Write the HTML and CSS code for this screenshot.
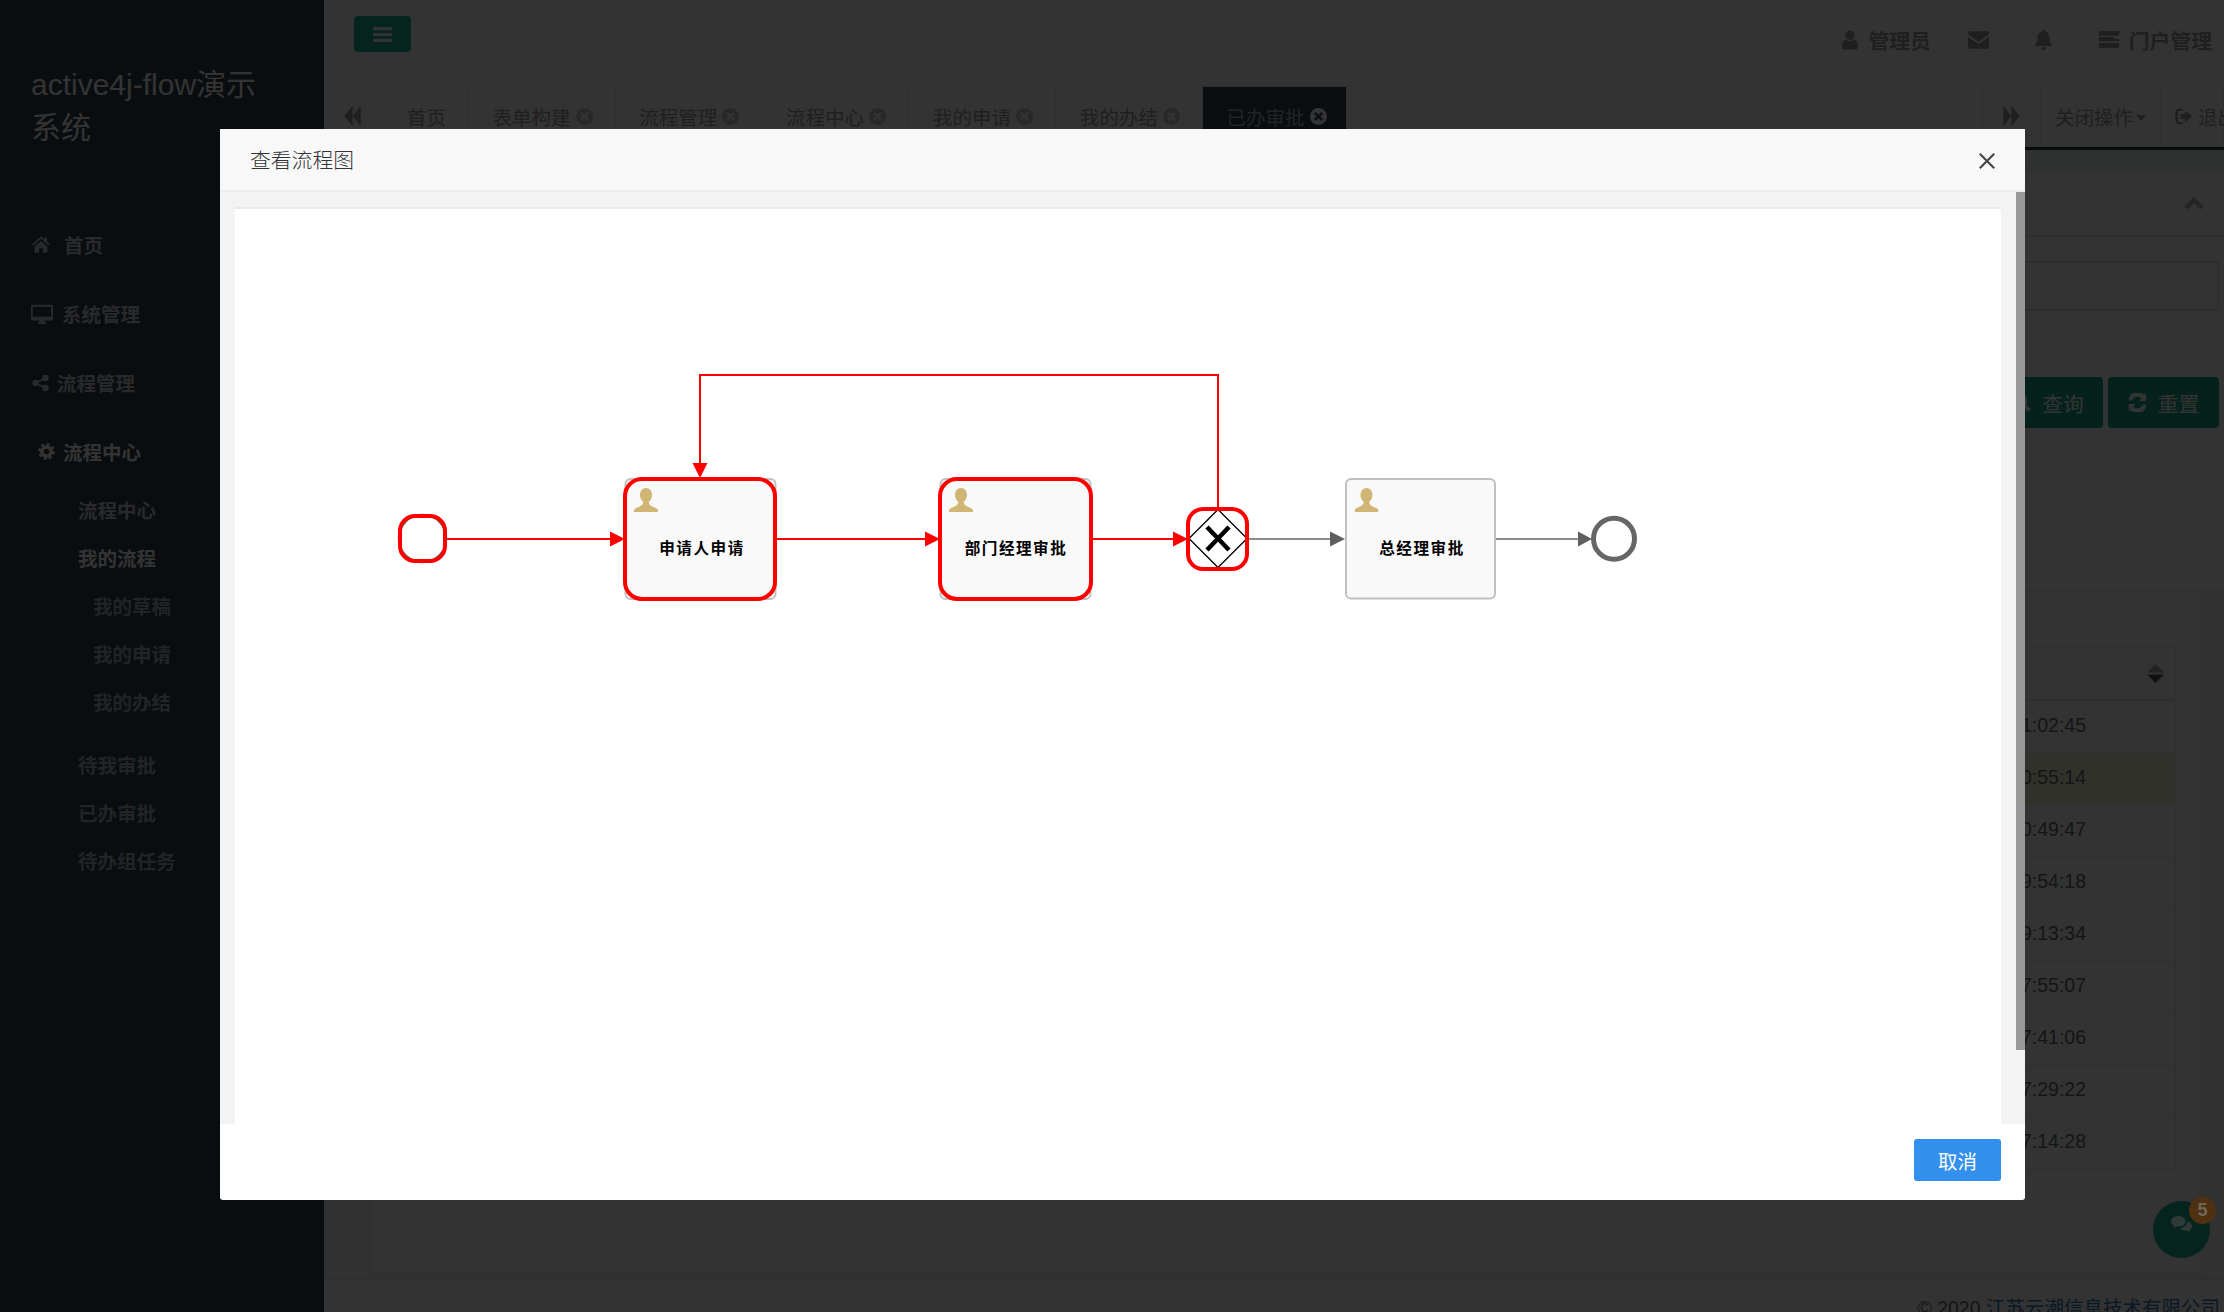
FILE: index.html
```html
<!DOCTYPE html>
<html lang="zh">
<head>
<meta charset="utf-8">
<title>查看流程图</title>
<link rel="stylesheet" href="styles.css">
</head>
<body>
<svg class="sprite" xmlns="http://www.w3.org/2000/svg" aria-hidden="true">
  <symbol id="i-home" viewBox="0 0 24 22"><path d="M12 0 L0 11 l1.6 1.8 L12 3.4 l10.4 9.4 L24 11 l-4-3.6 V1.5 h-3.4 v2.8z M3.5 14 v8 h6 v-6 h5 v6 h6 v-8 L12 6.2z"/></symbol>
  <symbol id="i-desktop" viewBox="0 0 24 24"><path fill-rule="evenodd" d="M1.5 2 h21 A1.5 1.5 0 0 1 24 3.5 v14 a1.5 1.5 0 0 1-1.5 1.5 H15 v1.5 l1.5 1.5 v1 h-9 v-1 L9 20.500 V19 H1.500 A1.500 1.500 0 0 1 0 17.500 v-14 A1.500 1.500 0 0 1 1.500 2z M2 4 v11 h20 V4z"/></symbol>
  <symbol id="i-share" viewBox="0 0 24 24"><circle cx="19" cy="5" r="4.500"/><circle cx="5" cy="12" r="4.500"/><circle cx="19" cy="19" r="4.500"/><path d="M19 5 L5 12 L19 19" fill="none" stroke="currentColor" stroke-width="2.500"/></symbol>
  <symbol id="i-cog" viewBox="0 0 24 24"><circle cx="12" cy="12" r="6.500" fill="none" stroke="currentColor" stroke-width="5"/><circle cx="12" cy="12" r="10" fill="none" stroke="currentColor" stroke-width="4" stroke-dasharray="4 3.850"/></symbol>
  <symbol id="i-user" viewBox="0 0 20 24"><circle cx="10" cy="6" r="6"/><path d="M0 21 c0-6 2-9 5-9.500 c3 2.500 7 2.500 10 0 c3 .5 5 3.500 5 9.500 c0 2-1.500 3-3 3 H3 c-1.500 0-3-1-3-3z"/></symbol>
  <symbol id="i-mail" viewBox="0 0 24 20"><path d="M2 0 h20 a2 2 0 0 1 2 2 c0 1-.7 2-1.700 2.800 L12 12 L1.700 4.800 C.7 4 0 3 0 2 a2 2 0 0 1 2-2z M0 6.500 L12 14.500 L24 6.500 V18 a2 2 0 0 1-2 2 H2 a2 2 0 0 1-2-2z"/></symbol>
  <symbol id="i-bell" viewBox="0 0 22 24"><path d="M11 0 a1.500 1.500 0 0 1 1.500 2 C16 3 18 6 18 10 c0 5 2 7 4 9 H0 c2-2 4-4 4-9 c0-4 2-7 5.500-8 A1.500 1.500 0 0 1 11 0z M8 20.500 h6 a3 3 0 0 1-6 0z"/></symbol>
  <symbol id="i-list" viewBox="0 0 24 20"><path d="M0 0 h24 v5.500 H0z M0 7 h18 v2 h6 v3 H0z M0 14 h24 v4 a2 2 0 0 1-2 2 H0z"/></symbol>
  <symbol id="i-bars" viewBox="0 0 20 18"><path d="M0 1 h20 v3.400 H0z M0 7.300 h20 v3.400 H0z M0 13.600 h20 v3.400 H0z"/></symbol>
  <symbol id="i-back" viewBox="0 0 18 22"><path d="M9 0 V22 L0 11z M18 0 V22 L9 11z"/></symbol>
  <symbol id="i-fwd" viewBox="0 0 18 22"><path d="M0 0 V22 L9 11z M9 0 V22 L18 11z"/></symbol>
  <symbol id="i-exit" viewBox="0 0 20 20"><path d="M5 1 h4 v2.500 H5 A1.500 1.500 0 0 0 3.500 5 v10 A1.500 1.500 0 0 0 5 16.500 h4 V19 H5 A4.500 4.500 0 0 1 .5 14.500 v-9 A4.500 4.500 0 0 1 5 1z M12 3 l8 7 l-8 7 v-4 H6.500 V7 H12z"/></symbol>
  <symbol id="i-close" viewBox="0 0 20 20"><path fill-rule="evenodd" d="M10 0 a10 10 0 1 1 0 20 a10 10 0 0 1 0-20z M6.800 4.700 L4.700 6.800 L7.900 10 L4.700 13.200 L6.800 15.300 L10 12.100 L13.200 15.300 L15.300 13.200 L12.100 10 L15.300 6.800 L13.200 4.700 L10 7.900z"/></symbol>
  <symbol id="i-search" viewBox="0 0 24 24"><circle cx="10" cy="10" r="7.500" fill="none" stroke="currentColor" stroke-width="4"/><path d="M15 15 L22 22" fill="none" stroke="currentColor" stroke-width="5"/></symbol>
  <symbol id="i-refresh" viewBox="0 0 24 24"><path d="M20 2 l3 -1 v9 h-9 l3.200-3.200 A7.500 7.500 0 0 0 5 9.500 H1 A11 11 0 0 1 20 2z M4 22 l-3 1 v-9 h9 l-3.200 3.200 A7.500 7.500 0 0 0 19 14.500 h4 A11 11 0 0 1 4 22z"/></symbol>
  <symbol id="i-comments" viewBox="0 0 26 22"><path d="M9 0 c5 0 9 2.800 9 6.500 S14 13 9 13 c-.8 0-1.500 0-2.200-.2 C5.500 14 4 14.600 2.500 15 C3.200 14 3.600 13 3.700 11.800 C1.400 10.600 0 8.700 0 6.500 C0 2.800 4 0 9 0z"/><path d="M20 6.500 C23.500 7.500 26 9.800 26 12.500 c0 2-1.200 3.600-3 4.600 c.1 1.200.5 2.200 1.200 2.900 c-1.500-.3-3-1-4.200-2.100 c-3.500.3-7-.8-8.500-3 C16 14.500 20.500 11.500 20 6.500z"/></symbol>
  <symbol id="i-task-user" viewBox="0 0 24 24"><path d="M12 0 c3.600 0 6 3 6 6.800 c0 3-1.200 5.400-3.100 7 c-.4 2 .6 3.400 3 4.500 l4.700 2.200 c.9.5 1.400 1.400 1.400 2.500 v1 H0 v-1 c0-1.100.5-2 1.400-2.500 l4.700-2.200 c2.400-1.100 3.400-2.500 3-4.500 C7.200 12.200 6 9.800 6 6.800 C6 3 8.400 0 12 0z"/></symbol>
</svg>

<div class="app">
  <aside class="sidebar">
    <h1 class="brand">active4j-flow演示系统</h1>
    <nav class="nav">
      <a class="nav-top"><svg class="ico ico-home"><use href="#i-home"/></svg>首页</a>
      <a class="nav-top"><svg class="ico ico-desktop"><use href="#i-desktop"/></svg>系统管理</a>
      <a class="nav-top"><svg class="ico ico-share"><use href="#i-share"/></svg>流程管理</a>
      <a class="nav-top nav-open"><svg class="ico ico-cog"><use href="#i-cog"/></svg>流程中心</a>
      <a class="nav-sub nav-first">流程中心</a>
      <a class="nav-sub nav-sub-open">我的流程</a>
      <a class="nav-third">我的草稿</a>
      <a class="nav-third">我的申请</a>
      <a class="nav-third">我的办结</a>
      <a class="nav-sub nav-gap">待我审批</a>
      <a class="nav-sub">已办审批</a>
      <a class="nav-sub">待办组任务</a>
    </nav>
  </aside>

  <main class="main">
    <header class="topbar">
      <button class="menu-btn"><svg class="ico-bars"><use href="#i-bars"/></svg></button>
      <div class="top-links">
        <span class="top-link top-user"><svg class="ico-user"><use href="#i-user"/></svg>管理员</span>
        <svg class="ico-mail"><use href="#i-mail"/></svg>
        <svg class="ico-bell"><use href="#i-bell"/></svg>
        <span class="top-link"><svg class="ico-list"><use href="#i-list"/></svg>门户管理</span>
      </div>
    </header>

    <div class="tabs">
      <span class="tab-arrow tab-arrow-left"><svg class="ico-arrow"><use href="#i-back"/></svg></span>
      <span class="tab tab-home">首页</span>
      <span class="tab">表单构建<svg class="tab-x"><use href="#i-close"/></svg></span>
      <span class="tab">流程管理<svg class="tab-x"><use href="#i-close"/></svg></span>
      <span class="tab">流程中心<svg class="tab-x"><use href="#i-close"/></svg></span>
      <span class="tab">我的申请<svg class="tab-x"><use href="#i-close"/></svg></span>
      <span class="tab">我的办结<svg class="tab-x"><use href="#i-close"/></svg></span>
      <span class="tab tab-active">已办审批<svg class="tab-x"><use href="#i-close"/></svg></span>
      <span class="tab-arrow tab-arrow-right"><svg class="ico-arrow"><use href="#i-fwd"/></svg></span>
      <span class="tab-ops">关闭操作<i class="caret"></i></span>
      <span class="tab-exit"><svg class="ico-exit"><use href="#i-exit"/></svg>退出</span>
    </div>

    <section class="content">
      <div class="strip"></div>
      <div class="search-box">
        <div class="search-head"><svg class="chevron" viewBox="0 0 20 14"><path d="M2 12 L10 4 L18 12"/></svg></div>
        <div class="search-body">
          <div class="search-input"></div>
          <div class="search-actions">
            <button class="btn btn-query"><svg class="btn-ico"><use href="#i-search"/></svg>查询</button>
            <button class="btn btn-reset"><svg class="btn-ico"><use href="#i-refresh"/></svg>重置</button>
          </div>
        </div>
      </div>
      <div class="list-panel">
        <div class="list-table">
          <div class="list-head"><svg class="sort" viewBox="0 0 18 20"><path class="sort-up" d="M9 0 L18 9 H0z"/><path d="M0 11 H18 L9 20z"/></svg></div>
          <div class="list-row">11:02:45</div>
          <div class="list-row list-row-on">10:55:14</div>
          <div class="list-row">10:49:47</div>
          <div class="list-row">09:54:18</div>
          <div class="list-row">09:13:34</div>
          <div class="list-row">17:55:07</div>
          <div class="list-row">17:41:06</div>
          <div class="list-row">17:29:22</div>
          <div class="list-row">17:14:28</div>
        </div>
      </div>
    </section>

    <footer class="footer">© 2020 <a class="footer-link">江苏云潮信息技术有限公司</a></footer>
  </main>
</div>

<div class="shade"></div>

<div class="chat">
  <svg class="chat-ico"><use href="#i-comments"/></svg>
  <span class="chat-badge">5</span>
</div>

<div class="modal">
  <div class="modal-head">
    <span class="modal-title">查看流程图</span>
    <svg class="modal-x" viewBox="0 0 20 20"><path d="M2 2 L18 18 M18 2 L2 18"/></svg>
  </div>
  <div class="modal-body">
    <div class="diagram">
      <svg class="flow" viewBox="235 209 1766 915" xmlns="http://www.w3.org/2000/svg">
        <g class="ln-red">
          <path d="M447 539 H612"/>
          <path d="M777 539 H927"/>
          <path d="M1093 539 H1175"/>
          <path d="M1218 507 V375 H700 V465"/>
        </g>
        <g class="ar-red">
          <path d="M610 531.500 L625 539 L610 546.500z"/>
          <path d="M925 531.500 L940 539 L925 546.500z"/>
          <path d="M1173 531.500 L1188 539 L1173 546.500z"/>
          <path d="M692.500 463 H707.500 L700 478z"/>
        </g>
        <g class="ln-grey">
          <path d="M1248 539 H1332"/>
          <path d="M1496 539 H1580"/>
        </g>
        <g class="ar-grey">
          <path d="M1330 531.500 L1345 539 L1330 546.500z"/>
          <path d="M1578 531.500 L1592 539 L1578 546.500z"/>
        </g>

        <circle class="ev-under" cx="422.500" cy="538.500" r="23.800"/>
        <rect class="hl" x="400" y="516" width="45" height="45" rx="15"/>

        <rect class="task" x="625.500" y="479" width="150" height="120" rx="5"/>
        <rect class="hl" x="625" y="479" width="150" height="120" rx="17"/>
        <use href="#i-task-user" class="task-ico" x="634" y="488" width="24" height="24"/>
        <text class="task-label" x="702" y="554">申请人申请</text>

        <rect class="task" x="940.500" y="479" width="150" height="120" rx="5"/>
        <rect class="hl" x="940" y="479" width="151" height="120" rx="17"/>
        <use href="#i-task-user" class="task-ico" x="949" y="488" width="24" height="24"/>
        <text class="task-label" x="1016" y="554">部门经理审批</text>

        <path class="gw" d="M1218 509.500 L1247 538.500 L1218 567.500 L1189 538.500z"/>
        <path class="gw-x" d="M1207 527 L1229 550 M1229 527 L1207 550"/>
        <rect class="hl" x="1188" y="509" width="59" height="60" rx="15"/>

        <rect class="task" x="1346" y="479" width="149" height="119.500" rx="5"/>
        <use href="#i-task-user" class="task-ico" x="1354.500" y="488" width="24" height="24"/>
        <text class="task-label" x="1422" y="554">总经理审批</text>

        <circle class="ev-end" cx="1614" cy="538.700" r="20.500"/>
      </svg>
    </div>
    <div class="modal-scroll"></div>
  </div>
  <div class="modal-foot"><button class="modal-cancel">取消</button></div>
</div>
</body>
</html>
```

FILE: styles.css
```css
* { box-sizing: border-box; }
html, body { margin: 0; height: 100%; }
body {
  position: relative;
  width: 2224px;
  height: 1312px;
  overflow: hidden;
  font-family: "Liberation Sans", "Noto Sans CJK SC", sans-serif;
  font-size: 19.5px;
  color: #676a6c;
  background: #fff;
}
svg { fill: currentColor; display: block; flex: none; }
.sprite { position: absolute; width: 0; height: 0; }

.app { display: flex; height: 1312px; }

/* sidebar */
.sidebar { width: 324px; flex: none; background: #2f4050; color: #a7b1c2; }
.brand {
  margin: 0;
  padding: 63px 50px 0 31px;
  font-size: 30px;
  font-weight: 400;
  line-height: 43px;
  color: #fff;
}
.nav { margin-top: 61px; display: flex; flex-direction: column; }
.nav-top {
  display: flex;
  align-items: center;
  height: 69px;
  padding-left: 32px;
  font-weight: 700;
  color: #c9ced8;
}
.nav-open { padding-left: 38px; color: #fff; height: 69px; }
.ico-home { width: 18px; height: 17px; margin-right: 14px; }
.ico-desktop { width: 22px; height: 22px; margin: 0 9px 0 -1px; }
.ico-share { width: 17px; height: 18px; margin-right: 8px; }
.ico-cog { width: 17px; height: 17px; margin-right: 8px; }
.nav-sub {
  display: flex;
  align-items: center;
  height: 47.800px;
  padding-left: 78px;
  font-weight: 700;
  color: #a7b1c2;
}
.nav-first { color: #c9ced8; }
.nav-sub-open { color: #fff; }
.nav-third {
  display: flex;
  align-items: center;
  height: 48px;
  padding-left: 93px;
  font-weight: 700;
}
.nav-gap { margin-top: 15px; }

/* main */
.main { flex: 1; min-width: 0; display: flex; flex-direction: column; overflow: hidden; }
.topbar {
  height: 87px;
  flex: none;
  display: flex;
  justify-content: space-between;
  padding: 16px 12px 0 30px;
  border-bottom: 1px solid #f0f0f0;
}
.menu-btn {
  width: 57px;
  height: 36px;
  border: 0;
  border-radius: 4px;
  background: #1ab394;
  color: #fff;
  display: flex;
  align-items: center;
  justify-content: center;
  padding: 0;
}
.ico-bars { width: 19px; height: 17px; }
.top-links {
  display: flex;
  align-items: center;
  height: 47px;
  font-size: 20.800px;
  font-weight: 700;
  color: #999c9e;
}
.top-link { display: flex; align-items: center; }
.ico-user { width: 16px; height: 20px; margin-right: 10px; }
.ico-mail { width: 21px; height: 18px; margin: 0 45px 0 37px; }
.ico-bell { width: 19px; height: 22px; margin-right: 45px; }
.ico-list { width: 22px; height: 17px; margin-right: 9px; }

.tabs {
  height: 63px;
  flex: none;
  display: flex;
  align-items: stretch;
  border-bottom: 3px solid #2f4050;
  color: #999c9e;
}
.tabs > span { display: flex; align-items: center; border-right: 1px solid #e7eaec; padding-bottom: 2px; }
.tab-arrow { justify-content: center; }
.tab-arrow-left { width: 58px; }
.tab-arrow-right { width: 59px; margin-left: auto; border-left: 1px solid #e7eaec; }
.ico-arrow { width: 17px; height: 20px; }
.tab { width: 146.800px; padding-left: 23.500px; white-space: nowrap; }
.tab-home { width: 87px; padding-left: 25px; }
.tab-x { width: 17px; height: 17px; margin-left: 5px; color: #c4c6c8; }
.tab-active { background: #2f4050; color: #a7b1c2; width: 144px; border-right: 0; }
.tab-active .tab-x { color: #fff; }
.tab-ops { width: 120px; padding-left: 14px; white-space: nowrap; }
.caret {
  width: 0;
  height: 0;
  margin: 4px 0 0 3px;
  border-top: 6px solid currentColor;
  border-left: 5.500px solid transparent;
  border-right: 5.500px solid transparent;
}
.tab-exit { width: 63px; flex: none; padding-left: 14px; white-space: nowrap; }
.ico-exit { width: 17px; height: 17px; margin-right: 6px; }

.content { flex: 1; min-height: 0; background: #f3f3f4; display: flex; flex-direction: column; }
.strip { height: 21px; background: #ecf3ef; flex: none; }
.search-box { background: #fff; height: 419px; flex: none; }
.search-head {
  height: 66px;
  display: flex;
  align-items: center;
  justify-content: flex-end;
  padding-right: 20px;
  border-bottom: 2px solid #e7eaec;
}
.chevron { width: 20px; height: 14px; fill: none; stroke: #b4b4b4; stroke-width: 4.500px; }
.search-body { padding: 24px 5px 0 0; }
.search-input { height: 50px; margin-left: 1700px; border: 2px solid #e5e6e7; }
.search-actions { display: flex; justify-content: flex-end; gap: 5px; margin-top: 66px; }
.btn {
  height: 51px;
  border: 0;
  border-radius: 4px;
  background: #18a689;
  color: #fff;
  font: inherit;
  font-size: 20.800px;
  display: flex;
  align-items: center;
  justify-content: center;
  gap: 11px;
  padding: 0;
}
.btn-query { width: 110px; }
.btn-reset { width: 111px; }
.btn-ico { width: 19px; height: 19px; }
.list-panel {
  height: 683px;
  flex: none;
  margin: 0 23px 5px 46px;
  background: #fff;
  border: 2px solid #ededed;
  padding: 55px 23px 0 23px;
}
.list-table { border: 1px solid #e7eaec; border-bottom: 0; color: #676a6c; }
.list-head {
  height: 53px;
  display: flex;
  align-items: center;
  justify-content: flex-end;
  padding-right: 11px;
  border-bottom: 2px solid #e7eaec;
}
.sort { width: 17px; height: 19px; fill: #555; }
.sort-up { fill: #aaa; }
.list-row {
  height: 52px;
  line-height: 48px;
  text-align: right;
  padding-right: 89px;
  border-bottom: 1px solid #e7eaec;
}
.list-row-on { background: #f6f6d8; }
.footer {
  height: 34px;
  flex: none;
  padding: 17px 4px 0 0;
  text-align: right;
  line-height: 22px;
  background: #fff;
  border-top: 2px solid #e7eaec;
  white-space: nowrap;
}
.footer-link { color: #337ab7; }

/* overlay + what sits on it */
.shade { position: absolute; inset: 0; background: rgba(0, 0, 0, .8); }
.chat {
  position: absolute;
  left: 2153px;
  top: 1201px;
  width: 57px;
  height: 57px;
  border-radius: 50%;
  background: #05241e;
  color: #2f3a37;
  display: flex;
  align-items: center;
  justify-content: center;
}
.chat-ico { width: 21px; height: 18px; margin-bottom: 9px; }
.chat-badge {
  position: absolute;
  left: 36px;
  top: -4px;
  width: 27px;
  height: 27px;
  border-radius: 50%;
  background: #4f3010;
  color: #6f6657;
  font-size: 18px;
  font-weight: 700;
  line-height: 27px;
  text-align: center;
}
.modal {
  position: absolute;
  left: 220px;
  top: 129px;
  width: 1805px;
  height: 1071px;
  background: #fff;
  border-radius: 0 0 3px 3px;
  display: flex;
  flex-direction: column;
  overflow: hidden;
}
.modal-head {
  height: 63px;
  flex: none;
  display: flex;
  align-items: center;
  justify-content: space-between;
  padding: 0 29px 2px 30px;
  background: #f8f8f8;
  border-bottom: 2px solid #eeeeee;
}
.modal-title { font-size: 20.800px; font-weight: 300; color: #333; font-family: "Noto Sans CJK SC", sans-serif; }
.modal-x { width: 18px; height: 18px; margin-top: 5px; fill: none; stroke: #45464a; stroke-width: 2.400px; }
.modal-body {
  flex: 1;
  min-height: 0;
  position: relative;
  background: #f3f3f3;
  padding: 15px 24px 0 15px;
}
.diagram { height: 100%; background: #fff; border-top: 2px solid #e7eaec; overflow: hidden; }
.flow { width: 1766px; height: 915px; }
.modal-scroll { position: absolute; right: 0; top: 0; width: 9px; height: 858px; background: #999; }
.modal-foot {
  height: 76px;
  flex: none;
  display: flex;
  justify-content: flex-end;
  padding: 15px 24px 0 0;
}
.modal-cancel {
  width: 87px;
  height: 42px;
  border: 0;
  border-radius: 3px;
  background: #3390ec;
  color: #fff;
  font-family: "Noto Sans CJK SC", sans-serif;
  font-size: 19.500px;
  padding: 0;
}

/* diagram */
.ln-red path { fill: none; stroke: #f00; stroke-width: 2px; }
.ar-red path { fill: #f00; stroke: none; }
.ln-grey path { fill: none; stroke: #666; stroke-width: 1.600px; }
.ar-grey path { fill: #5f5f5f; stroke: none; }
.ev-under { fill: #fff; stroke: #666; stroke-width: 2px; }
.hl { fill: none; stroke: #f00; stroke-width: 4px; }
.task { fill: #f9f9f9; stroke: #c0c0c0; stroke-width: 2px; }
.task-ico { color: #d1b574; fill: #d1b574; }
.task-label {
  font-family: "Noto Sans CJK SC", sans-serif;
  font-size: 15.600px;
  font-weight: 700;
  letter-spacing: 1.500px;
  text-anchor: middle;
  fill: #000;
}
.gw { fill: #fff; stroke: #000; stroke-width: 1.300px; }
.gw-x { fill: none; stroke: #000; stroke-width: 4.500px; }
.ev-end { fill: #fff; stroke: #666; stroke-width: 5px; }
```
